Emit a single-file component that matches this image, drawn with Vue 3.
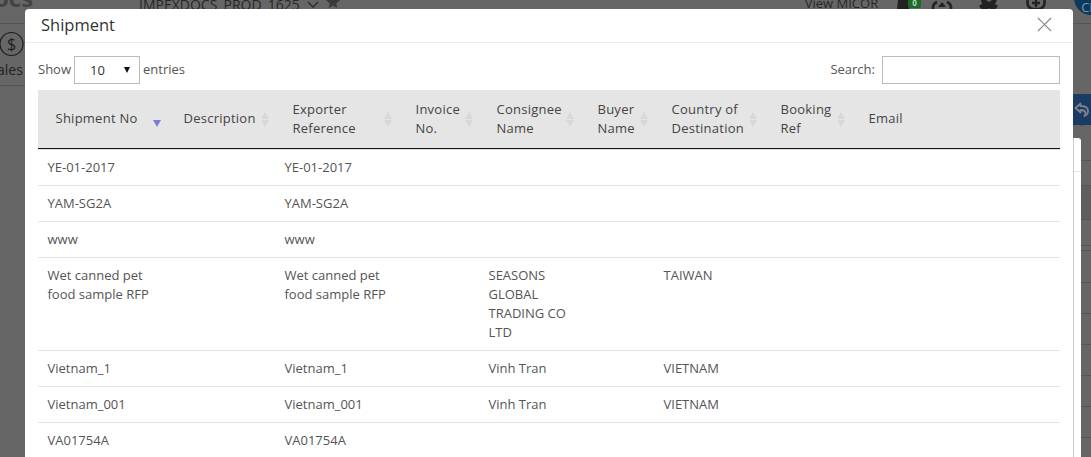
<template>
  <div class="page">
    <div class="topbar">
      <span class="logo">ocs</span>
      <span class="project">IMPEXDOCS_PROD_1625</span>
      <svg class="chev" width="12" height="8" viewBox="0 0 12 8"><path d="M1 1l5 5 5-5" fill="none" stroke="#2a2a2a" stroke-width="1.3" /></svg>
      <svg class="star" width="14" height="14" viewBox="0 0 14 14"><path d="M7 0l2 4.6 5 .5-3.8 3.3L11.3 13 7 10.5 2.700 13l1.100-4.600L0 5.100l5-.5z" fill="#3a3a3a" /></svg>
      <span class="view">View MICOR</span>
      <div class="tools">
        <svg class="bell" width="24" height="10" viewBox="0 0 24 10">
          <path d="M0 10l1-10h11v10z" fill="#222" />
          <rect x="11" y="-3" width="13" height="11" rx="2" fill="#1c6a2a" />
          <text x="17.500" y="6" text-anchor="middle" font-size="8" font-weight="700" fill="#b9d6be" font-family="Open Sans">0</text>
        </svg>
        <svg class="headset" width="22" height="10" viewBox="0 0 22 10">
          <path d="M2 10V7a6 6 0 0 1 4-5M20 10V7a6 6 0 0 0-4-5" fill="none" stroke="#222" stroke-width="2.600" />
          <path d="M11 2l4 5h-8z" fill="#222" />
        </svg>
        <svg class="gear" width="20" height="10" viewBox="0 0 20 10">
          <path d="M2 0h5l3 2 3-2h5l-2 4 3 2-3 4h-4l-2-2-2 2H3L0 6l3-2z" fill="#222" />
        </svg>
        <svg class="plus" width="20" height="10" viewBox="0 0 20 10">
          <path d="M1.500 0v3a6 6 0 0 0 6 6h5a6 6 0 0 0 6-6V0" fill="none" stroke="#222" stroke-width="2.600" />
          <path d="M10 0v7M6 3h8" stroke="#222" stroke-width="2.400" />
        </svg>
      </div>
      <span class="avatar">CI</span>
    </div>
    <div class="main">
      <div class="sidebar">
        <svg width="25" height="26" viewBox="0 0 25 26"><circle cx="11.500" cy="13" r="11.500" fill="none" stroke="#1c1c1c" stroke-width="1.200" /><text x="11.500" y="19" text-anchor="middle" font-size="16" fill="#1c1c1c" font-family="Open Sans">$</text></svg>
        <span>ales</span>
      </div>
      <div class="side-right">
        <div class="reply">
          <svg width="15" height="15" viewBox="0 0 15 15"><path d="M6.500 1.500L1.500 6l5 4.500V8c3 0 5 .5 5 3.500 0 1-.5 2-1 2.500 2.500-1 3.500-3 3.500-5 0-3.500-3-5-7.500-5z" fill="none" stroke="#7d828c" stroke-width="1.800" stroke-linejoin="round" /></svg>
        </div>
        <div class="panel">
          <div class="panel-card"><div class="card-line"></div></div>
          <div class="panel-rows">
            <div v-for="(h, i) in stripRows" :key="i" class="strip-row" :style="{ height: h + 'px' }"></div>
          </div>
        </div>
      </div>
    </div>
  </div>

  <div class="modal">
    <div class="modal-header">
      <h4>Shipment</h4>
      <svg class="close" width="15" height="15" viewBox="0 0 15 15"><path d="M1 1l13 13M14 1L1 14" fill="none" stroke="#888" stroke-width="1.200" /></svg>
    </div>
    <div class="modal-body">
      <div class="controls">
        <label class="length">
          <span class="lbl">Show</span>
          <span class="select"><span>10</span><i></i></span>
          <span class="lbl">entries</span>
        </label>
        <label class="search">
          <span class="lbl">Search:</span>
          <input type="text" />
        </label>
      </div>
      <table>
        <colgroup>
          <col v-for="c in columns" :key="c.title" :style="{ width: c.width + 'px' }" />
        </colgroup>
        <thead>
          <tr>
            <th v-for="c in columns" :key="c.title">
              <span class="th-text">{{ c.title }}</span>
              <span v-if="c.sort === 'desc'" class="sort-desc"></span>
              <span v-else-if="c.sort" class="sort"><i></i><i></i></span>
            </th>
          </tr>
        </thead>
        <tbody>
          <tr v-for="(r, i) in rows" :key="i">
            <td>{{ r[0] }}</td>
            <td></td>
            <td>{{ r[0] }}</td>
            <td></td>
            <td>{{ r[1] }}</td>
            <td></td>
            <td>{{ r[2] }}</td>
            <td></td>
            <td></td>
          </tr>
        </tbody>
      </table>
    </div>
  </div>
</template>

<script setup>
const columns = [
  { title: 'Shipment No', width: 128, sort: 'desc' },
  { title: 'Description', width: 109, sort: true },
  { title: 'Exporter Reference', width: 123, sort: true },
  { title: 'Invoice No.', width: 81, sort: true },
  { title: 'Consignee Name', width: 101, sort: true },
  { title: 'Buyer Name', width: 74, sort: true },
  { title: 'Country of Destination', width: 109, sort: true },
  { title: 'Booking Ref', width: 88, sort: true },
  { title: 'Email', width: 209 }
]

const rows = [
  ['YE-01-2017', '', ''],
  ['YAM-SG2A', '', ''],
  ['www', '', ''],
  ['Wet canned pet food sample RFP', 'SEASONS GLOBAL TRADING CO LTD', 'TAIWAN'],
  ['Vietnam_1', 'Vinh Tran', 'VIETNAM'],
  ['Vietnam_001', 'Vinh Tran', 'VIETNAM'],
  ['VA01754A', '', '']
]

// row heights of the table peeking out behind the modal, right edge
const stripRows = [23, 25, 34, 26, 5, 32, 31, 31, 31, 31, 31]
</script>

<style>
html, body {
  margin: 0;
  height: 100%;
  overflow: hidden;
  background: #666;
}
</style>

<style scoped>
* {
  box-sizing: border-box;
}

.page {
  height: 457px;
  overflow: hidden;
  background: #666;
  font-family: 'Open Sans', sans-serif;
  color: #222;
}

.topbar {
  display: flex;
  height: 24px;
  overflow: hidden;
  border-bottom: 1px solid #555;
  font-size: 14px;
  line-height: 19px;
}

.logo {
  flex: none;
  width: 139px;
  margin-top: -19px;
  margin-left: -6px;
  margin-right: 6px;
  font-size: 24px;
  line-height: 33px;
  font-weight: 700;
  color: #444;
}

.project {
  flex: none;
  margin-top: -5px;
  color: #262626;
}

.chev {
  flex: none;
  margin-left: 7px;
  margin-top: 1px;
}

.star {
  flex: none;
  margin-left: 7px;
  margin-top: -5px;
}

.view {
  flex: none;
  margin-left: 465px;
  margin-top: -6px;
  font-size: 13px;
  color: #262626;
}

.tools {
  display: flex;
  flex: none;
  align-items: flex-start;
  margin-left: 19px;
}

.headset {
  margin-left: 10px;
}

.gear {
  margin-left: 26px;
}

.plus {
  margin-left: 27px;
}

.avatar {
  flex: none;
  width: 34px;
  height: 34px;
  margin-left: 28px;
  margin-top: -19px;
  padding: 19px 0 0 7px;
  border-radius: 50%;
  background: #0d3a5c;
  color: #7f97aa;
  font-size: 13px;
  line-height: 15px;
}

.main {
  display: flex;
  justify-content: space-between;
  height: 433px;
}

.sidebar {
  width: 25px;
  height: 62px;
  display: flex;
  flex-direction: column;
  border-bottom: 1px solid #555;
  padding-top: 7px;
  font-size: 14px;
  line-height: 19px;
  overflow: hidden;
  color: #222;
}

.sidebar span {
  margin-left: -3px;
  margin-top: 3px;
}

.side-right {
  width: 18px;
  padding-top: 70px;
}

.reply {
  display: flex;
  align-items: center;
  height: 31px;
  padding-left: 1px;
  background: #1a3b64;
  box-shadow: 0 8px 0 -7px #555;
}

.panel {
  display: flex;
  margin-top: 13px;
}

.panel-card {
  width: 8px;
  height: 320px;
  background: #fff;
  border-left: 1px solid #ccc;
  border-top-right-radius: 3px;
}

.card-line {
  height: 34px;
  border-bottom: 1px solid #e5e5e5;
}

.panel-rows {
  flex: 1;
}

.strip-row {
  border-bottom: 1px solid #555;
}

.strip-row:nth-child(3) {
  background: #5e5e5e;
}

.modal {
  position: fixed;
  left: 25px;
  top: 9px;
  width: 1048px;
  height: 460px;
  background: #fff;
  border-radius: 4px;
  font-family: 'Open Sans', sans-serif;
  color: #444;
}

.modal-header {
  display: flex;
  align-items: center;
  justify-content: space-between;
  height: 34px;
  padding: 0 21px 2px 16px;
  border-bottom: 1px solid #e9ecef;
}

.modal-header h4 {
  margin: 0;
  font-size: 16.500px;
  font-weight: 400;
  color: #333;
}

.modal-body {
  padding: 13px 13px 0;
}

.controls {
  display: flex;
  justify-content: space-between;
  align-items: center;
  height: 28px;
  margin-bottom: 6px;
  font-size: 13px;
  color: #555;
}

.length, .search {
  display: flex;
  align-items: center;
  gap: 3px;
}

.lbl {
  margin-top: -2px;
}

.search {
  gap: 7px;
}

.select {
  display: flex;
  align-items: center;
  justify-content: space-between;
  width: 66px;
  height: 28px;
  padding: 0 9px 0 15px;
  border: 1px solid #bbb;
  font-size: 13px;
  color: #333;
}

.select i {
  border-left: 3.500px solid transparent;
  border-right: 3.500px solid transparent;
  border-top: 6px solid #111;
}

.search input {
  width: 178px;
  height: 28px;
  border: 1px solid #bbb;
  padding: 0;
  outline: none;
}

table {
  width: 1022px;
  table-layout: fixed;
  border-collapse: separate;
  border-spacing: 0;
  font-size: 13px;
}

th {
  position: relative;
  height: 59px;
  padding: 0 15px 1px 17.500px;
  background: #e5e5e5;
  border-bottom: 1px solid #111;
  text-align: left;
  font-weight: 500;
  font-size: 13px;
  letter-spacing: 0.25px;
  line-height: 19px;
  color: #444;
}

.sort {
  position: absolute;
  right: 6px;
  top: 22px;
  display: flex;
  flex-direction: column;
  gap: 1px;
}

.sort i {
  border-left: 4px solid transparent;
  border-right: 4px solid transparent;
  border-bottom: 7px solid #d8d8d8;
}

.sort i:last-child {
  border-bottom: 0;
  border-top: 7px solid #d8d8d8;
}

.sort-desc {
  position: absolute;
  left: 115px;
  top: 30px;
  border-left: 4px solid transparent;
  border-right: 4px solid transparent;
  border-top: 7px solid #7b7be0;
}

td {
  padding: 8px 9px 8px 9.500px;
  border-bottom: 1px solid #e3e3e8;
  line-height: 19px;
  vertical-align: top;
  color: #555;
}

tbody tr:first-child td {
  border-top: 1px solid #e3e3e3;
}
</style>
